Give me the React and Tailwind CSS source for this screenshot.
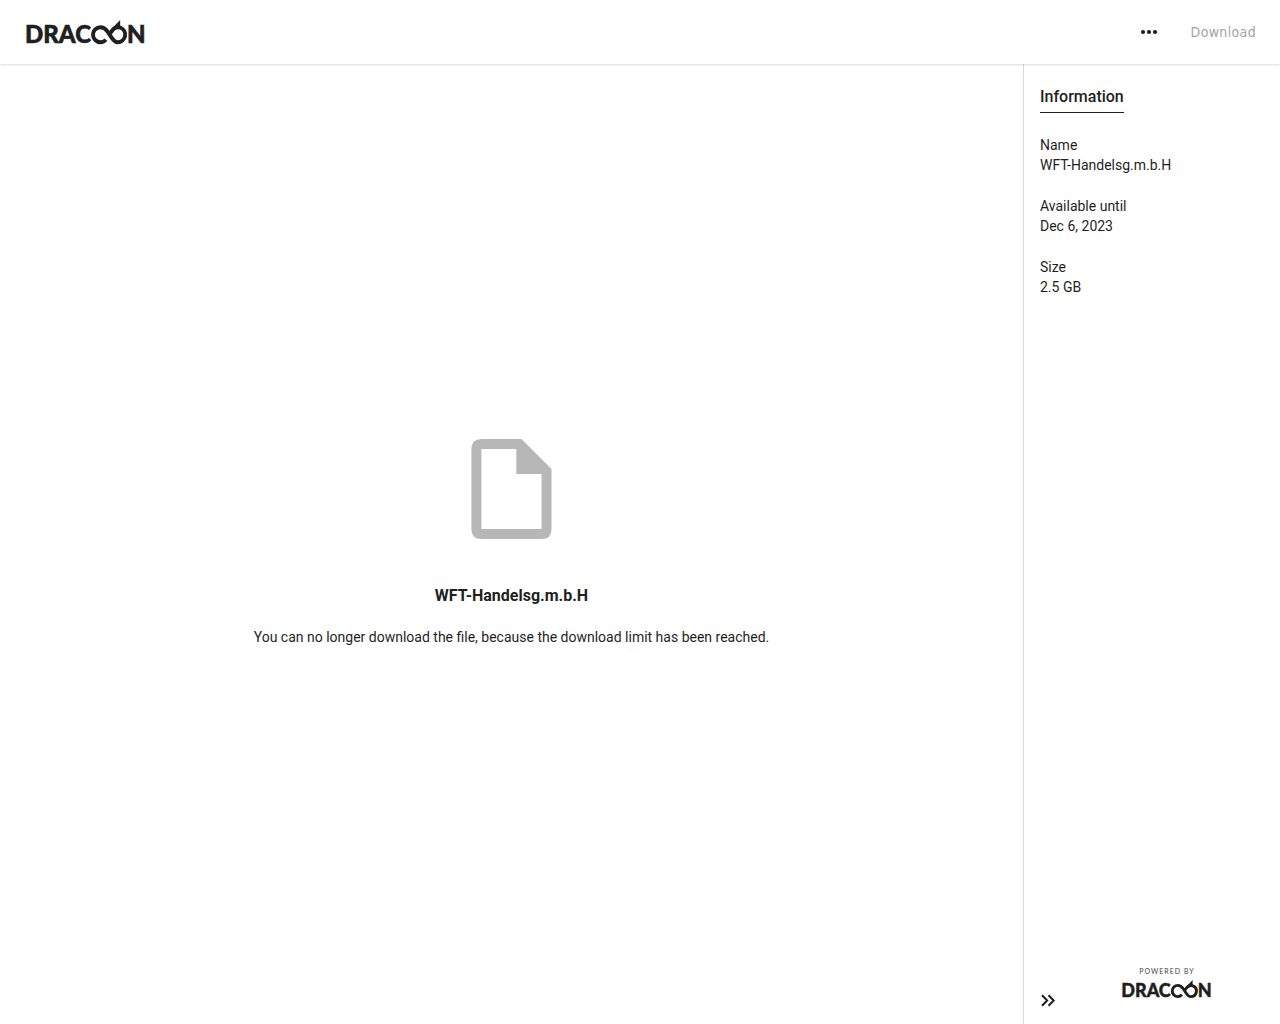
import { useState } from 'react';

// --- LOGO ---
const DracoonLogo = ({ className }) => (
  <svg viewBox="-2 0 124 32" className={className} fill="#1f1f1f" role="img" aria-label="DRACOON">
    <g fontFamily="Lato, sans-serif" fontWeight="900" fontSize="24" stroke="#1f1f1f" strokeWidth="0.6">
      <text x="-1" y="27">DRAC</text>
      <text x="101" y="27">N</text>
    </g>
    <path
      fill="none"
      stroke="#1f1f1f"
      strokeWidth="3.9"
      d="M79.8 23.6C78.4 25.4 76.6 26.2 74.5 26.2A7.5 7.5 0 0 1 74.5 11.2C77.6 11.2 79.4 12.6 81.4 15.4L85.6 21.6C87.4 24.4 89 26.2 91.8 26.2A7.5 7.5 0 0 0 94.6 11.8C91.5 10.6 88.4 11.8 86.6 14L84.4 17"
    />
    <path d="M85.8 12.6L94.2 4V11L88 13.2Z" />
  </svg>
);

const InfoItem = ({ label, value }) => (
  <div className="text-sm leading-5">
    <dt>{label}</dt>
    <dd>{value}</dd>
  </div>
);

const details = [
  { label: 'Name', value: 'WFT-Handelsg.m.b.H' },
  { label: 'Available until', value: 'Dec 6, 2023' },
  { label: 'Size', value: '2.5 GB' },
];

export default function App() {
  const [open, setOpen] = useState(true);

  return (
    <div className="flex min-h-screen flex-col bg-white font-[Roboto,sans-serif] text-[#1f1f1f]">
      {/* Header */}
      <header className="z-10 flex h-16 shrink-0 items-center justify-between px-6 shadow-[0_1px_2px_rgba(0,0,0,0.15)]">
        <a href="#">
          <DracoonLogo className="h-8 w-[124px]" />
        </a>
        <div className="flex items-center gap-8">
          <button type="button" aria-label="More options" className="cursor-pointer">
            <svg width="20" height="20" viewBox="0 0 20 20" fill="#1f1f1f">
              <circle cx="4" cy="10" r="2.1" />
              <circle cx="10" cy="10" r="2.1" />
              <circle cx="16" cy="10" r="2.1" />
            </svg>
          </button>
          <button type="button" disabled className="font-['DejaVu_Sans_Condensed','DejaVu_Sans',sans-serif] text-sm tracking-wide text-[#a3a3a3]">
            Download
          </button>
        </div>
      </header>

      <div className="flex flex-1">
        {/* File preview */}
        <main className="flex flex-1 flex-col items-center justify-center px-6 pb-0.5">
          <svg width="81" height="100" viewBox="0 0 81 100" fill="#b7b7b7" aria-hidden="true">
            <path
              fillRule="evenodd"
              d="M10.4 0H50.5L80.5 30V90Q80.5 100 70.5 100H10.4Q0.4 100 0.4 90V10Q0.4 0 10.4 0ZM10.4 10V90H70.5V35H45.3V10Z"
            />
          </svg>
          <h1 className="mt-[45px] text-base font-bold leading-6">WFT-Handelsg.m.b.H</h1>
          <p className="mt-[19px] text-sm leading-5">
            You can no longer download the file, because the download limit has been reached.
          </p>
        </main>

        {/* Sidebar */}
        <aside className={`flex flex-col border-l border-[#d9d9d9] ${open ? 'w-[257px]' : 'w-14'}`}>
          {open && (
            <div className="px-4 pt-[21px]">
              <h2 className="w-fit border-b border-[#1f1f1f] pb-[3px] text-base font-medium leading-6">Information</h2>
              <dl className="mt-[22px] flex flex-col gap-[21px]">
                {details.map((d) => (
                  <InfoItem key={d.label} label={d.label} value={d.value} />
                ))}
              </dl>
            </div>
          )}
          <div className="mt-auto flex items-end gap-15 px-3 pb-3">
            <button
              type="button"
              aria-label="Toggle sidebar"
              onClick={() => setOpen(!open)}
              className="cursor-pointer"
            >
              <svg width="24" height="24" viewBox="0 0 24 24" fill="none" stroke="#1f1f1f" strokeWidth="2">
                <path d="M6 7.2L11.2 12.5L6 17.8M12.5 7.2L17.7 12.5L12.5 17.8" />
              </svg>
            </button>
            {open && (
              <div className="flex flex-col items-center pb-[11px]">
                <span className="font-[Lato,sans-serif] text-[7px] leading-3 tracking-[1px] text-[#444444]">POWERED BY</span>
                <DracoonLogo className="h-6 w-[94px]" />
              </div>
            )}
          </div>
        </aside>
      </div>
    </div>
  );
}
